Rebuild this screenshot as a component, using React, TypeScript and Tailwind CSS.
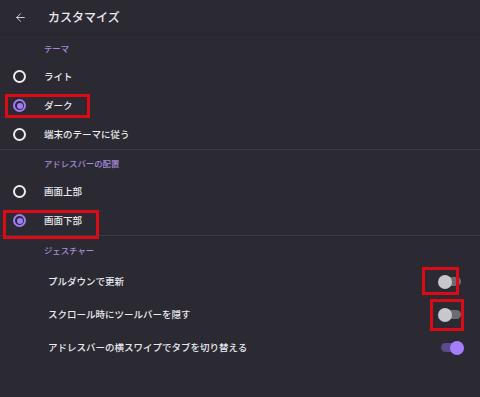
import { ArrowLeft } from 'lucide-react'

const FONT = { fontFamily: '"Noto Sans CJK JP", "Noto Sans", sans-serif' }

function Radio({ checked }: { checked?: boolean }) {
  return checked ? (
    <span className="w-[13px] h-[13px] rounded-full border-2 border-[#a27cf7] flex items-center justify-center">
      <span className="w-[6px] h-[6px] rounded-full bg-[#a27cf7]" />
    </span>
  ) : (
    <span className="w-[13px] h-[13px] rounded-full border-2 border-[#ececf0]" />
  )
}

function Toggle({ on }: { on?: boolean }) {
  return (
    <span className="relative w-[26px] h-[14px] flex items-center">
      <span
        className={`absolute left-[3px] right-[3px] h-[9px] rounded-full ${
          on ? 'bg-[#5b4a8c]' : 'bg-[#6c6b72]'
        }`}
      />
      <span
        className={`absolute w-[14px] h-[14px] rounded-full ${
          on ? 'right-0 bg-[#a57dff]' : 'left-0 bg-[#c8c8cc]'
        }`}
      />
    </span>
  )
}

const SectionTitle = ({ label, h }: { label: string; h: string }) => (
  <div className={`${h} flex items-center pl-[44px] text-[8.4px] font-medium text-[#a68bd8]`}>
    {label}
  </div>
)

const RadioRow = ({ label, checked }: { label: string; checked?: boolean }) => (
  <div className="h-[29px] flex items-center">
    <div className="w-[44px] flex items-center pl-[13px]">
      <Radio checked={checked} />
    </div>
    <span className="text-[9.5px] font-medium text-[#e9e9ee]">{label}</span>
  </div>
)

const ToggleRow = ({ label, on }: { label: string; on?: boolean }) => (
  <div className="h-[33px] flex items-center pl-[48px] pr-[16px]">
    <span className="flex-1 text-[9.5px] font-medium text-[#e9e9ee]">{label}</span>
    <Toggle on={on} />
  </div>
)

export default function App() {
  return (
    <div className="relative w-[480px] h-[397px] bg-[#2b2a33] overflow-hidden" style={FONT}>
      {/* Top bar */}
      <div className="h-[35px] flex items-center border-b border-[#27262e]">
        <div className="w-[48px] flex items-center pl-[14px]">
          <ArrowLeft size={13} strokeWidth={1.6} className="text-[#e9e9ee]" />
        </div>
        <span className="text-[12px] font-medium text-[#ececf0]">カスタマイズ</span>
      </div>

      <SectionTitle label="テーマ" h="h-[27px]" />
      <RadioRow label="ライト" />
      <RadioRow label="ダーク" checked />
      <RadioRow label="端末のテーマに従う" />

      <div className="h-px bg-[#3b3a43]" />

      <SectionTitle label="アドレスバーの配置" h="h-[27px]" />
      <RadioRow label="画面上部" />
      <RadioRow label="画面下部" checked />

      <div className="h-px bg-[#3b3a43]" />

      <SectionTitle label="ジェスチャー" h="h-[29px]" />
      <ToggleRow label="プルダウンで更新" />
      <ToggleRow label="スクロール時にツールバーを隠す" />
      <ToggleRow label="アドレスバーの横スワイプでタブを切り替える" on />

      {/* red annotation boxes */}
      <div className="absolute left-[5px] top-[94px] w-[85px] h-[24px] border-[3px] border-[#dc0a14]" />
      <div className="absolute left-[3px] top-[210px] w-[96px] h-[29px] border-[3px] border-[#dc0a14]" />
      <div className="absolute left-[422px] top-[267px] w-[37px] h-[28px] border-[3px] border-[#dc0a14]" />
      <div className="absolute left-[430px] top-[299px] w-[34px] h-[32px] border-[3px] border-[#dc0a14]" />
    </div>
  )
}
